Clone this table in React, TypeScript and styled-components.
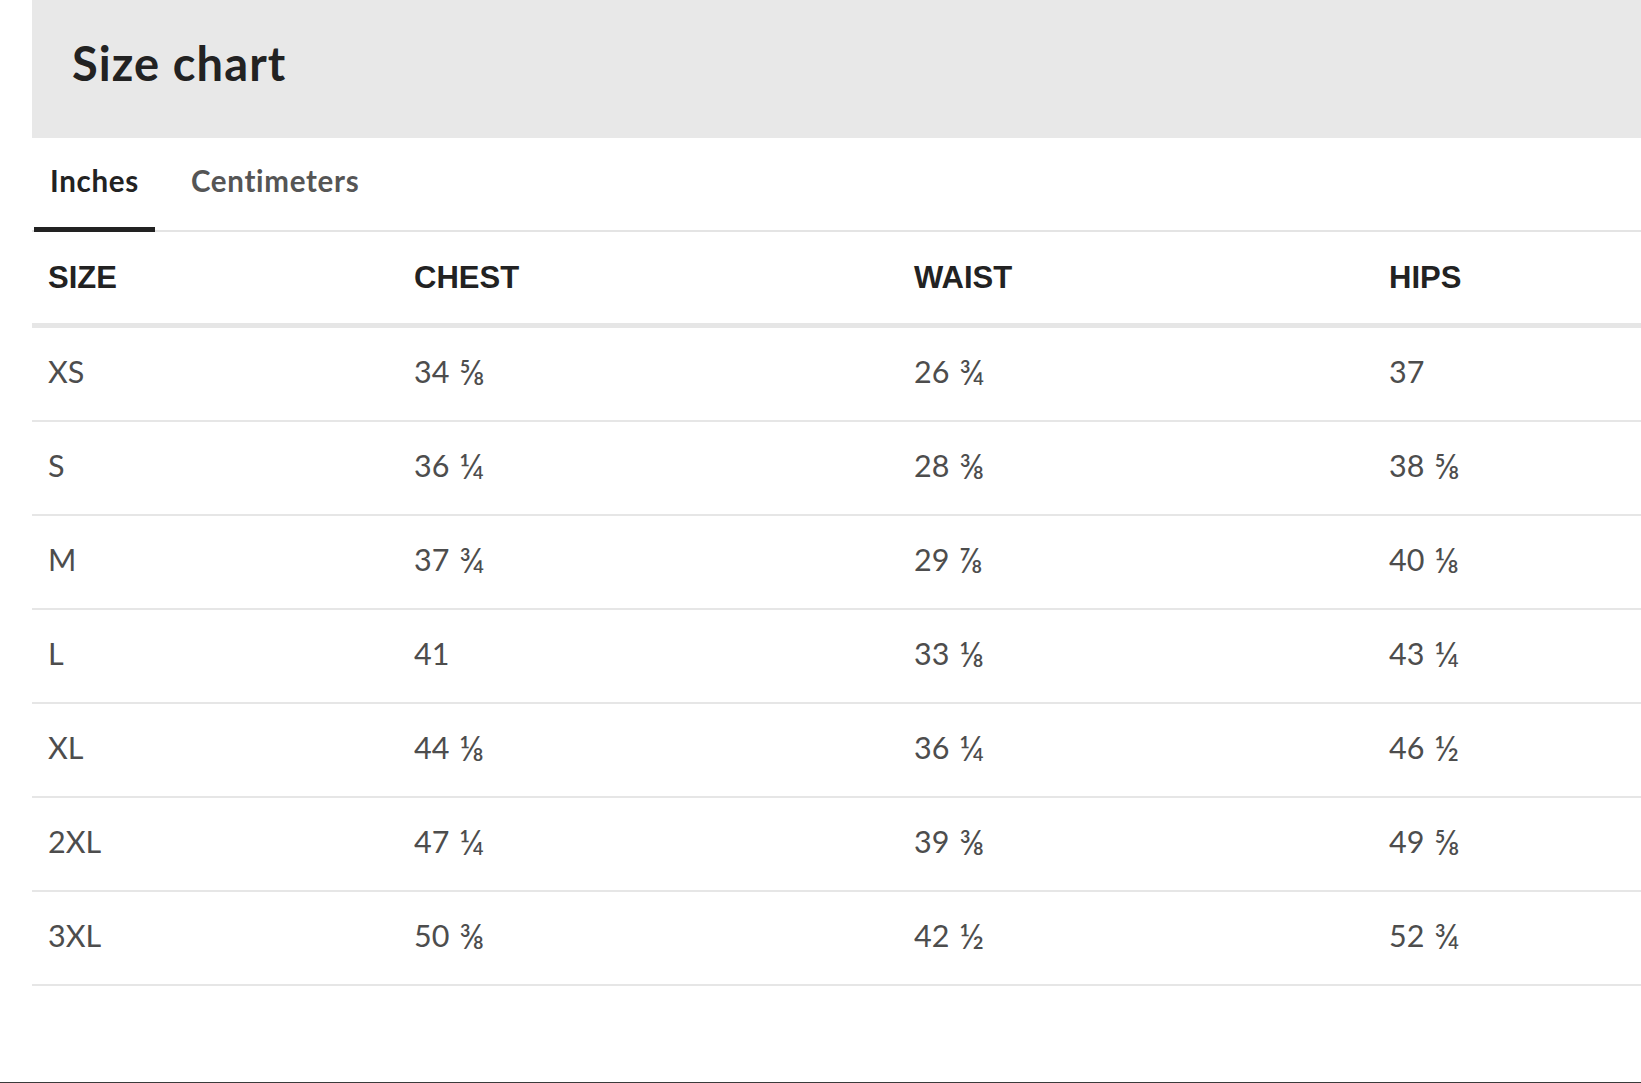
import React, { useState } from "react";
import styled, { createGlobalStyle } from "styled-components";

const GlobalStyle = createGlobalStyle`
  html, body {
    margin: 0;
    padding: 0;
    background: #ffffff;
  }
  body {
    font-family: Lato, "Open Sans", "Noto Sans", sans-serif;
    -webkit-font-smoothing: antialiased;
  }
`;

const Page = styled.div`
  height: 1083px;
  box-sizing: border-box;
  border-bottom: 1px solid #3a3a3a;
  padding-left: 32px;
  overflow: hidden;
`;

const Panel = styled.section`
  display: flex;
  flex-direction: column;
`;

const Header = styled.header`
  height: 138px;
  box-sizing: border-box;
  background: #e8e8e8;
  display: flex;
  align-items: center;
  padding: 0 0 12px 40px;
`;

const Title = styled.h1`
  margin: 0;
  font-family: Lato, sans-serif;
  font-weight: 700;
  font-size: 47px;
  color: #222222;
  letter-spacing: 1.1px;
`;

const TabList = styled.div`
  height: 94px;
  box-sizing: border-box;
  display: flex;
  align-items: stretch;
  gap: 20px;
  padding-left: 2px;
  border-bottom: 2px solid #e4e4e4;
`;

const Tab = styled.button<{ $active: boolean }>`
  appearance: none;
  background: none;
  border: none;
  margin: 0 0 -2px 0;
  padding: 0 16px 4px;
  font-family: Lato, sans-serif;
  font-weight: 700;
  font-size: 29.5px;
  letter-spacing: 0.7px;
  color: ${(p) => (p.$active ? "#222222" : "#555555")};
  border-bottom: 5px solid ${(p) => (p.$active ? "#222222" : "transparent")};
  cursor: pointer;
`;

const Table = styled.div`
  display: grid;
  grid-template-columns: 366px 500px 475px 1fr;
`;

const HeadCell = styled.div`
  height: 96px;
  box-sizing: border-box;
  display: flex;
  align-items: center;
  padding-left: 16px;
  border-bottom: 5px solid #e6e6e6;
  font-family: "Liberation Sans", Arial, sans-serif;
  font-weight: 700;
  font-size: 31px;
  color: #222222;
`;

const Cell = styled.div`
  height: 94px;
  box-sizing: border-box;
  display: flex;
  align-items: center;
  padding: 0 0 6px 16px;
  border-bottom: 2px solid #e6e6e6;
  font-family: Lato, sans-serif;
  font-weight: 400;
  font-size: 30.5px;
  color: #4d4d4d;
  white-space: pre;
`;

const Frac = styled.span`
  font-size: 1.12em;
  margin-left: 0.06em;
`;

const headers = ["SIZE", "CHEST", "WAIST", "HIPS"];

const inchRows: string[][] = [
  ["XS", "34 ⅝", "26 ¾", "37"],
  ["S", "36 ¼", "28 ⅜", "38 ⅝"],
  ["M", "37 ¾", "29 ⅞", "40 ⅛"],
  ["L", "41", "33 ⅛", "43 ¼"],
  ["XL", "44 ⅛", "36 ¼", "46 ½"],
  ["2XL", "47 ¼", "39 ⅜", "49 ⅝"],
  ["3XL", "50 ⅜", "42 ½", "52 ¾"],
];

const cmRows: string[][] = [
  ["XS", "88", "68", "94"],
  ["S", "92", "72", "98"],
  ["M", "96", "76", "102"],
  ["L", "104", "84", "110"],
  ["XL", "112", "92", "118"],
  ["2XL", "120", "100", "126"],
  ["3XL", "128", "108", "134"],
];

function Value({ text }: { text: string }) {
  const [whole, frac] = text.split(" ");
  return (
    <>
      {whole}
      {frac ? (
        <>
          {" "}
          <Frac>{frac}</Frac>
        </>
      ) : null}
    </>
  );
}

export default function App() {
  const [unit, setUnit] = useState<"in" | "cm">("in");
  const rows = unit === "in" ? inchRows : cmRows;
  return (
    <>
      <GlobalStyle />
      <Page>
        <Panel>
          <Header>
            <Title>Size chart</Title>
          </Header>
          <TabList>
            <Tab $active={unit === "in"} onClick={() => setUnit("in")}>
              Inches
            </Tab>
            <Tab $active={unit === "cm"} onClick={() => setUnit("cm")}>
              Centimeters
            </Tab>
          </TabList>
          <Table>
            {headers.map((h) => (
              <HeadCell key={h}>{h}</HeadCell>
            ))}
            {rows.map((r) =>
              r.map((v, i) => (
                <Cell key={r[0] + i}>
                  <Value text={v} />
                </Cell>
              ))
            )}
          </Table>
        </Panel>
      </Page>
    </>
  );
}
